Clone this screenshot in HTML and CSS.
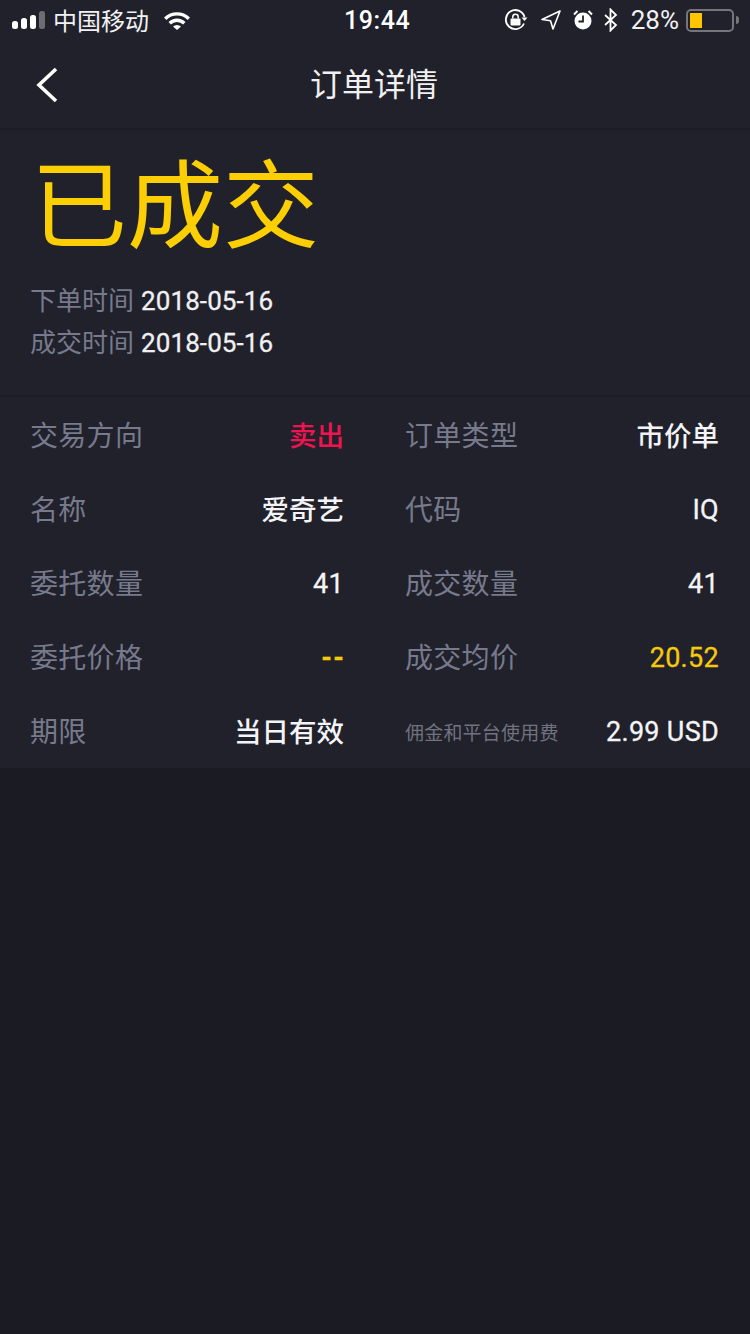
FILE: index.html
```html
<!DOCTYPE html>
<html lang="zh-CN">
<head>
    <meta charset="UTF-8">
    <meta name="viewport" content="width=device-width, initial-scale=1.0">
    <title>订单详情</title>
    <link rel="stylesheet" href="styles.css">
</head>
<body>
    <div class="topbar">
        <div class="status">
            <div class="status-left">
                <svg class="signal" width="34" height="20" viewBox="0 0 34 20">
                    <rect x="0" y="11" width="6" height="8" rx="2.5" fill="#fff"/>
                    <rect x="9" y="8" width="6" height="11" rx="2.5" fill="#fff"/>
                    <rect x="18" y="5" width="6" height="14" rx="2.5" fill="#fff"/>
                    <rect x="27" y="1" width="6" height="18" rx="2.5" fill="#6d6e73"/>
                </svg>
                <span class="carrier">中国移动</span>
                <svg class="wifi" width="28" height="20" viewBox="0 0 28 20">
                    <path d="M1 7.500a18.500 18.500 0 0 1 26 0l-2.400 2.500a15 15 0 0 0-21.200 0z" fill="#fff"/>
                    <path d="M5.500 12a12 12 0 0 1 17 0l-2.400 2.500a8.500 8.500 0 0 0-12.200 0z" fill="#fff"/>
                    <path d="M10 16.500a6 6 0 0 1 8 0l-4 3.500z" fill="#fff"/>
                </svg>
            </div>
            <div class="clock">19:44</div>
            <div class="status-right">
                <svg width="24" height="24" viewBox="0 0 24 24" fill="none">
                    <path d="M20 15.500A9.500 9.500 0 1 1 20.500 9" stroke="#fff" stroke-width="1.800"/>
                    <path d="M17.500 9.500h6l-3 3.500z" fill="#fff"/>
                    <rect x="6.500" y="10.500" width="10" height="7" rx="1" fill="#fff"/>
                    <path d="M8.800 10.500V9a2.700 2.700 0 0 1 5.400 0v1.500" stroke="#fff" stroke-width="1.500"/>
                </svg>
                <svg class="gap-loc" width="20" height="20" viewBox="0 0 20 20" fill="none">
                    <path d="M19 1 1 9.500l8.500 1.200L12 19z" stroke="#fff" stroke-width="1.600" stroke-linejoin="round"/>
                </svg>
                <svg class="gap-alarm" width="20" height="22" viewBox="0 0 20 22">
                    <circle cx="10" cy="12" r="8.500" fill="#fff"/>
                    <path d="M10 6.500V12.500H5.500" stroke="#20212b" stroke-width="1.800" fill="none"/>
                    <path d="M1 5.500 4.500 2M19 5.500 15.500 2" stroke="#fff" stroke-width="2"/>
                </svg>
                <svg class="gap-bt" width="16" height="24" viewBox="0 0 16 24" fill="none">
                    <path d="M2 7l11 10-5.500 5.500V1.500L13 7 2 17" stroke="#fff" stroke-width="1.800"/>
                </svg>
                <span class="percent">28%</span>
                <div class="battery"><div class="battery-fill"></div></div>
                <div class="battery-tip"></div>
            </div>
        </div>
        <div class="nav">
            <svg class="back" width="24" height="36" viewBox="0 0 24 36" fill="none">
                <path d="M21 2 4 18l17 16" stroke="#fff" stroke-width="3.600"/>
            </svg>
            <h1>订单详情</h1>
        </div>
    </div>

    <div class="summary">
        <div class="state">已成交</div>
        <div class="time-row"><span class="muted">下单时间</span> <span class="date">2018-05-16</span></div>
        <div class="time-row"><span class="muted">成交时间</span> <span class="date">2018-05-16</span></div>
    </div>

    <div class="details">
        <div class="item"><span class="label">交易方向</span><span class="value red">卖出</span></div>
        <div class="item"><span class="label">订单类型</span><span class="value">市价单</span></div>
        <div class="item"><span class="label">名称</span><span class="value">爱奇艺</span></div>
        <div class="item"><span class="label">代码</span><span class="value num">IQ</span></div>
        <div class="item"><span class="label">委托数量</span><span class="value num">41</span></div>
        <div class="item"><span class="label">成交数量</span><span class="value num">41</span></div>
        <div class="item"><span class="label">委托价格</span><span class="value num yellow dashes">--</span></div>
        <div class="item"><span class="label">成交均价</span><span class="value num yellow">20.52</span></div>
        <div class="item"><span class="label">期限</span><span class="value">当日有效</span></div>
        <div class="item"><span class="label small">佣金和平台使用费</span><span class="value num">2.99 USD</span></div>
    </div>
</body>
</html>
```

FILE: styles.css
```css
* {
    box-sizing: border-box;
}

body {
    width: 750px;
    height: 1334px;
    margin: 0;
    overflow: hidden;
    background-color: #1a1b23;
    color: #fff;
    font-family: 'Roboto', 'Noto Sans CJK SC', sans-serif;
}

.topbar {
    height: 130px;
    background-color: #20212b;
    border-bottom: 2px solid #1c1d25;
}

.status {
    height: 40px;
    padding: 0 11px 0 12px;
    display: grid;
    grid-template-columns: 332px auto 1fr;
    align-items: center;
}

.status-left,
.status-right {
    display: flex;
    align-items: center;
}

.status-right {
    justify-content: flex-end;
}

.carrier {
    margin-left: 7px;
    margin-bottom: 2px;
    font-size: 24px;
    color: #f2f2f3;
}

.wifi {
    margin-left: 14px;
}

.clock {
    font-size: 25px;
    font-weight: 500;
    letter-spacing: 0.6px;
}

.gap-loc {
    margin-left: 13px;
}

.gap-alarm {
    margin-left: 12px;
}

.gap-bt {
    margin-left: 10px;
}

.percent {
    margin-left: 12px;
    font-size: 26px;
    color: #f2f2f3;
}

.battery {
    width: 48px;
    height: 23px;
    margin-left: 7px;
    padding: 2px;
    border: 2px solid #75767b;
    border-radius: 5px;
}

.battery-fill {
    width: 12px;
    height: 100%;
    background-color: #fcc500;
}

.battery-tip {
    width: 3px;
    height: 8px;
    margin-left: 2px;
    background-color: #75767b;
    border-radius: 0 3px 3px 0;
}

.nav {
    position: relative;
    height: 88px;
    padding-right: 2px;
    display: flex;
    align-items: center;
    justify-content: center;
}

.nav h1 {
    margin: 0 0 4px;
    font-size: 32px;
    font-weight: 400;
    color: #f0f0f1;
}

.back {
    position: absolute;
    left: 35px;
    top: 27px;
}

.summary {
    height: 267px;
    padding: 0 30px;
    background-color: #20212b;
    border-bottom: 2px solid #1c1d25;
}

.state {
    height: 150px;
    padding-top: 6px;
    padding-left: 1px;
    font-size: 96px;
    line-height: 143px;
    color: #fbcf04;
}

.time-row {
    height: 42px;
    display: flex;
    align-items: center;
    gap: 7px;
    line-height: 42px;
}

.muted {
    font-size: 26px;
    color: #777a8c;
}

.date {
    font-size: 26px;
    font-weight: 400;
    letter-spacing: 0.1px;
    color: #f0f0f2;
    -webkit-text-stroke: 0.3px #f0f0f2;
}

.details {
    height: 371px;
    padding: 1px 30px 0;
    display: grid;
    grid-template-columns: 314px 314px;
    grid-auto-rows: 74px;
    column-gap: 61px;
    background-color: #20212b;
}

.item {
    display: flex;
    align-items: center;
    justify-content: space-between;
}

.label {
    padding-bottom: 3px;
    font-size: 28px;
    letter-spacing: 0.3px;
    color: #777a8c;
}

.label.small {
    padding-bottom: 0;
    font-size: 19px;
    letter-spacing: 0.2px;
    color: #70727f;
}

.value {
    padding-bottom: 2px;
    font-size: 27.5px;
    font-weight: 500;
    color: #f4f4f6;
}

.num {
    padding-bottom: 0;
    padding-top: 2px;
    font-size: 27px;
    font-weight: 400;
    letter-spacing: 0.3px;
    -webkit-text-stroke: 0.3px;
}

.dashes {
    font-weight: 700;
    letter-spacing: 1.5px;
    margin-right: -1.5px;
}

.red {
    color: #f0134f;
}

.yellow {
    color: #f6c90e;
}
```
